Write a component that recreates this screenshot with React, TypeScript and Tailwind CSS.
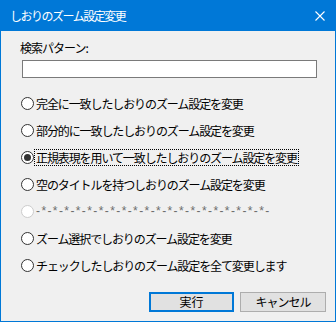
const FONT = 'font-["Meiryo_UI","Noto_Sans_CJK_JP",sans-serif]';

interface RadioProps {
  label: string;
  checked?: boolean;
  disabled?: boolean;
  focused?: boolean;
}

function Radio({ label, checked, disabled, focused }: RadioProps): JSX.Element {
  return (
    <div className="flex h-[27px] items-center pl-[20px]">
      <span
        className={`flex h-[13px] w-[13px] shrink-0 items-center justify-center rounded-full border bg-white ${
          disabled ? 'border-[#cccccc]' : 'border-[#333333]'
        }`}
      >
        {checked && <span className="h-[7px] w-[7px] rounded-full bg-[#333333]" />}
      </span>
      {disabled ? (
        <span className='ml-[2px] font-["Liberation_Sans",sans-serif] text-[12px] leading-[15px] tracking-[1.4px] text-[#6d6d6d]'>
          {label}
        </span>
      ) : (
        <span
          className={`ml-[1px] px-[1px] text-[12px] leading-[15px] tracking-[-1.1px] text-black ${
            focused ? 'outline outline-1 outline-dotted outline-black' : ''
          }`}
        >
          {label}
        </span>
      )}
    </div>
  );
}

export default function App(): JSX.Element {
  const options: RadioProps[] = [
    { label: '完全に一致したしおりのズーム設定を変更' },
    { label: '部分的に一致したしおりのズーム設定を変更' },
    { label: '正規表現を用いて一致したしおりのズーム設定を変更', checked: true, focused: true },
    { label: '空のタイトルを持つしおりのズーム設定を変更' },
    { label: '-*-*-*-*-*-*-*-*-*-*-*-*-*-*-*-*-*-*-*-*-', disabled: true },
    { label: 'ズーム選択でしおりのズーム設定を変更' },
    { label: 'チェックしたしおりのズーム設定を全て変更します' },
  ];

  return (
    <div className={`flex h-[322px] w-[336px] flex-col ${FONT}`}>
      <div className="flex h-[31px] shrink-0 items-center justify-between bg-[#0078d7] pl-[10px] pr-[11px]">
        <span className="text-[12px] tracking-[-1.5px] text-white">しおりのズーム設定変更</span>
        <svg width="10" height="10" viewBox="0 0 10 10" className="block">
          <path d="M0.5 0.5 L9.5 9.5 M9.5 0.5 L0.5 9.5" stroke="white" strokeWidth="1.1" />
        </svg>
      </div>
      <div className="flex flex-1 flex-col border-x border-b border-[#0078d7] bg-[#f0f0f0]">
        <div className="mt-[9px] pl-[19px] text-[12px] leading-[16px] tracking-[-1px] text-black">検索パターン:</div>
        <div className="ml-[21px] mr-[18px] mt-[4px] h-[18px] border border-[#7a7a7a] bg-white" />
        <div className="mt-[12px] flex flex-col">
          {options.map((o) => (
            <Radio key={o.label} {...o} />
          ))}
        </div>
        <div className="mt-[13px] flex justify-end gap-[6px] pr-[9px]">
          <button className="h-[20px] w-[85px] border-2 border-[#0078d7] bg-[#e1e1e1] text-[12px] leading-none text-black">
            実行
          </button>
          <button className="h-[20px] w-[86px] border border-[#adadad] bg-[#e1e1e1] text-[12px] leading-none tracking-[-1px] text-black">
            キャンセル
          </button>
        </div>
      </div>
    </div>
  );
}
